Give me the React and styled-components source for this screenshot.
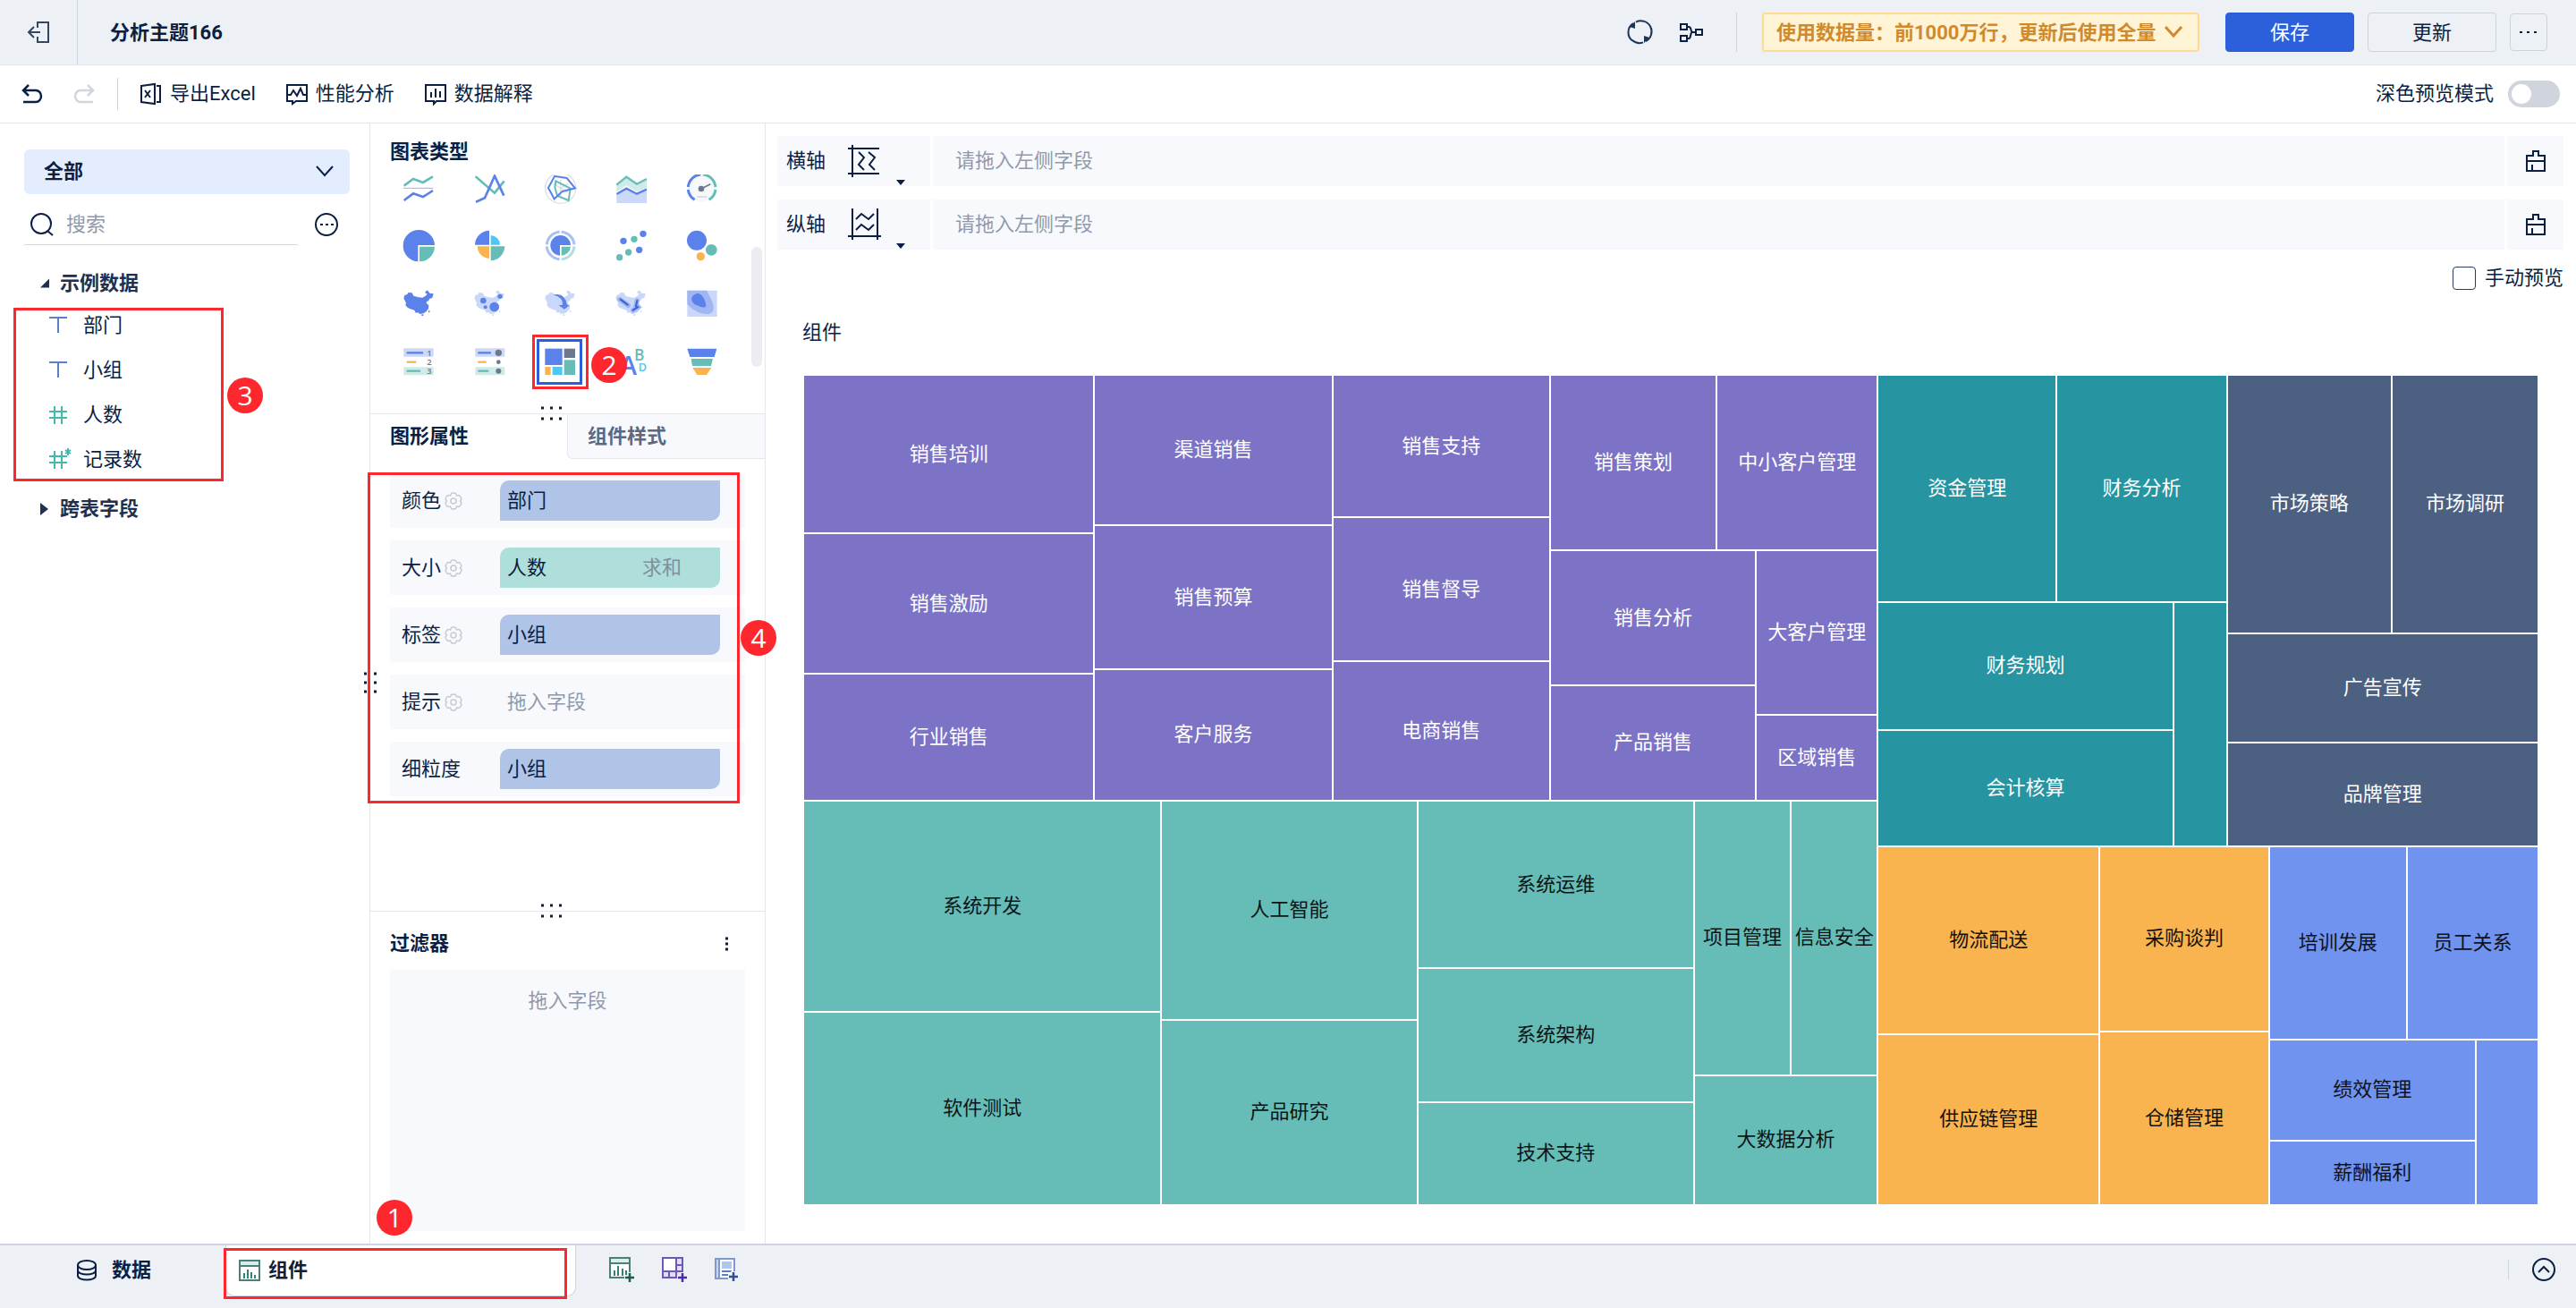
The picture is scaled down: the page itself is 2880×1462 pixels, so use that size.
import React from "react";
import styled, { createGlobalStyle, css } from "styled-components";

const INK = "#0b1f43";
const MUTED = "#8f99ab";
const BLUE = "#5a82ea";
const TEAL = "#66bdb7";
const ORANGE = "#f9b44f";
const CYAN = "#50c6f2";
const GREY = "#6b7890";
const PALE_BLUE = "#c9d7fb";

/* ---------- data ---------- */

const FIELDS = [
  { name: "部门", type: "text" },
  { name: "小组", type: "text" },
  { name: "人数", type: "number" },
  { name: "记录数", type: "count" },
];

const ATTRIBUTES = [
  { label: "颜色", gear: true, field: "部门", color: "#b0c4e8" },
  { label: "大小", gear: true, field: "人数", color: "#aedfda", summary: "求和" },
  { label: "标签", gear: true, field: "小组", color: "#b0c4e8" },
  { label: "提示", gear: true },
  { label: "细粒度", field: "小组", color: "#b0c4e8" },
];

const row = (size, items) => ({ size, dir: "row", items });
const col = (size, items) => ({ size, dir: "column", items });
const leaf = (size, name) => ({ size, name });
const dept = (node, bg, fg) => ({ ...node, bg, fg });

const TREE = row(1, [
  col(1200, [
    dept(row(475, [
      col(325, [leaf(177, "销售培训"), leaf(156, "销售激励"), leaf(142, "行业销售")]),
      col(266, [leaf(168, "渠道销售"), leaf(160, "销售预算"), leaf(147, "客户服务")]),
      col(243, [leaf(159, "销售支持"), leaf(160, "销售督导"), leaf(156, "电商销售")]),
      col(366, [
        row(196, [leaf(186, "销售策划"), leaf(180, "中小客户管理")]),
        row(279, [
          col(230, [leaf(150, "销售分析"), leaf(129, "产品销售")]),
          col(136, [leaf(183, "大客户管理"), leaf(96, "区域销售")]),
        ]),
      ]),
    ]), "#7c73c6", "#ffffff"),
    dept(row(451, [
      col(400, [leaf(235, "系统开发"), leaf(216, "软件测试")]),
      col(286, [leaf(244, "人工智能"), leaf(207, "产品研究")]),
      col(309, [leaf(187, "系统运维"), leaf(149, "系统架构"), leaf(115, "技术支持")]),
      col(205, [
        row(306, [leaf(108, "项目管理"), leaf(97, "信息安全")]),
        leaf(145, "大数据分析"),
      ]),
    ]), "#66bdb7", "#0d1516"),
  ]),
  col(738, [
    row(526, [
      dept(col(390, [
        row(253, [leaf(200, "资金管理"), leaf(190, "财务分析")]),
        row(273, [
          col(330, [leaf(143, "财务规划"), leaf(130, "会计核算")]),
          leaf(60, ""),
        ]),
      ]), "#2694a1", "#ffffff"),
      dept(col(348, [
        row(288, [leaf(184, "市场策略"), leaf(164, "市场调研")]),
        leaf(122, "广告宣传"),
        leaf(116, "品牌管理"),
      ]), "#4c6081", "#ffffff"),
    ]),
    row(400, [
      dept(row(437, [
        col(248, [leaf(209, "物流配送"), leaf(191, "供应链管理")]),
        col(189, [leaf(206, "采购谈判"), leaf(194, "仓储管理")]),
      ]), "#f9b44f", "#14120d"),
      dept(col(301, [
        row(215, [leaf(154, "培训发展"), leaf(147, "员工关系")]),
        row(185, [
          col(231, [leaf(113, "绩效管理"), leaf(72, "薪酬福利")]),
          leaf(70, ""),
        ]),
      ]), "#6f93ee", "#0d1220"),
    ]),
  ]),
]);

/* ---------- icons ---------- */

const Line = ({ w, h, box, color = INK, width = 2, children, ...rest }) => (
  <svg width={w} height={h} viewBox={box || `0 0 ${w} ${h}`} fill="none" stroke={color} strokeWidth={width} aria-hidden="true" {...rest}>
    {children}
  </svg>
);

const ExitIcon = () => (
  <Line w={24} h={24} color="#33475f">
    <path d="M11 7V1h12v22H11v-6M1 12h13M7 6l-6 6 6 6" />
  </Line>
);

const RefreshIcon = () => (
  <Line w={28} h={28} color="#1d3557">
    <path d="M6 23.500A12 12 0 0 1 7 4M10 2.600A12 12 0 0 1 21 24M18 25.400A12 12 0 0 1 6 23" />
    <path d="M9 2v8l-6-2zM19 26v-8l6 2z" fill="#1d3557" stroke="none" />
  </Line>
);

const FlowIcon = () => (
  <Line w={28} h={24}>
    <path d="M2 3h7v6H2zM2 16h7v6H2zM19 9h7v6h-7zM9 6h2q2 0 2.500 3l1 3q-1 1-1.500 4-.5 3-2 3H9M14 12h5" />
  </Line>
);

const Chevron = ({ color = INK, width = 2, size = 20 }) => (
  <Line w={size} h={12} box="0 0 20 12" color={color} width={width}>
    <path d="M1 1l9 10 9-10" />
  </Line>
);

const UndoIcon = ({ color = INK, flip }) => (
  <Line w={24} h={22} color={color} width={2.5} transform={flip ? "scale(-1 1)" : undefined}>
    <path d="M8 1L2 7l6 6M2 7h14a6 6.500 0 0 1 0 13H2" />
  </Line>
);

const ExcelIcon = () => (
  <Line w={24} h={24}>
    <path d="M1 3l15-2v22L1 21zM18 3h4v18h-4M5 8l6 8M11 8l-6 8" />
  </Line>
);

const PerformanceIcon = () => (
  <Line w={24} h={24}>
    <path d="M1 2h22v18H11l-4 3v-3H1zM1 13h4l3-5 4 6 4-8 3 7h4" />
  </Line>
);

const ExplainIcon = () => (
  <Line w={24} h={24}>
    <path d="M1 2h22v18H13l-3 3v-3H1zM7 10v6M12 6v10M17 9v7" />
  </Line>
);

const SearchIcon = () => (
  <Line w={26} h={26} width={2}>
    <circle cx="12" cy="12" r="11" />
    <path d="M19 20l6 5" />
  </Line>
);

const MoreCircleIcon = () => (
  <Line w={26} h={26} width={2}>
    <circle cx="13" cy="13" r="12" />
    <path d="M6 13h3M12 13h3M18 13h3" />
  </Line>
);

const FieldIcon = ({ type }) => {
  if (type === "text") {
    return (
      <Line w={26} h={22} color="#5b80cb" width={2}>
        <path d="M0 2h20M10 2v17" />
      </Line>
    );
  }
  return (
    <Line w={26} h={22} color="#42b9aa" width={2}>
      <path d="M0 7h20M0 14h20M6 1v20M14 1v20" />
      {type === "count" && <path d="M21-2v8M18 0l6 4M24 0l-6 4" />}
    </Line>
  );
};

const GearIcon = () => (
  <Line w={20} h={20} color="#c5cad4" width={1.5}>
    <path d="M7.500 1.500q2.500-1 5 0l1 2.500 3-.5q2 1.500 2.500 4.500l-1.500 2 1.500 2q-.5 3-2.500 4.500l-3-.5-1 2.500q-2.500 1-5 0l-1-2.500-3 .5q-2-1.500-2.500-4.500l1.500-2-1.500-2q.5-3 2.500-4.500l3 .5z" />
    <circle cx="10" cy="10" r="3" />
  </Line>
);

const HorizontalAxisIcon = () => (
  <Line w={38} h={38}>
    <path d="M6 1v36M1 5h35M1 33h35M13 9l6 6-6 8 6 6M24 9l7 6-6 8 6 6" />
  </Line>
);

const VerticalAxisIcon = () => (
  <Line w={38} h={38}>
    <path d="M6 1v35M34 1v35M1 32h37M10 13l6-6 8 6 6-6M10 25l6-6 8 6 6-6" />
  </Line>
);

const BrushIcon = () => (
  <Line w={24} h={24}>
    <path d="M9 6V1h6v5h7v6H2V6zM2 12v11h20V12M8 16v7" />
  </Line>
);

const DatabaseIcon = () => (
  <Line w={22} h={24}>
    <ellipse cx="11" cy="6" rx="10" ry="5" />
    <path d="M1 6v12c0 6 20 6 20 0V6M1 12c0 6 20 6 20 0" />
  </Line>
);

const ComponentIcon = () => (
  <Line w={24} h={24} color="#4c7f7a">
    <path d="M1 1h22v6H1z" fill="#d8eeeb" />
    <path d="M1 7h22v16H1z" fill="#fff" />
    <path d="M6 15v6M10 11v10M14 14v7M18 17v4" stroke="#2f8276" />
  </Line>
);

const AddComponentIcon = () => (
  <Line w={28} h={28} color="#4c7f7a">
    <path d="M1 1h22v6H1z" fill="#d8eeeb" />
    <path d="M1 7h22v16H1z" fill="#fff" />
    <path d="M6 15v6M10 10v11M15 13v8M19 15v5" stroke="#2f8276" />
    <path d="M23 17v12M17 23h12" stroke="#edf1f6" strokeWidth="6" />
    <path d="M23 18v10M18 23h10" stroke="#22594f" strokeWidth="2.500" />
  </Line>
);

const AddDashboardIcon = () => (
  <Line w={28} h={28} color="#6d58b8">
    <path d="M1 1h22v22H1z" fill="#e1dcf8" />
    <path d="M1 1h15v15H1z" fill="#fff" />
    <path d="M16 9h7M8 16v7M16 16v7M16 16h7" />
    <path d="M23 17v12M17 23h12" stroke="#edf1f6" strokeWidth="6" />
    <path d="M23 18v10M18 23h10" stroke="#4a2fa0" strokeWidth="2.500" />
  </Line>
);

const AddReportIcon = () => (
  <Line w={28} h={28} color="#8299c8">
    <path d="M1 2h21v22H1z" fill="#fff" />
    <path d="M1 2h4v22H1z" fill="#c5d5f2" />
    <path d="M8 5h11v8H8z" fill="#b0c6ec" stroke="none" />
    <path d="M8 16h11M8 20h7" stroke="#4f7fd0" />
    <path d="M21 16v12M15 22h12" stroke="#edf1f6" strokeWidth="6" />
    <path d="M21 17v10M16 22h10" stroke="#2f4f90" strokeWidth="2.500" />
  </Line>
);

const CollapseIcon = () => (
  <Line w={26} h={26} width={2}>
    <circle cx="13" cy="13" r="12" />
    <path d="M7 16l6-6 6 6" />
  </Line>
);

const CHINA =
  "M4 34l3-10 9-3 3-6 13 1 5 10 16 5 14 1 9-5 7-7-7-4 2-6 7-2 6 9 13 2-4 14-10 3-2 7-6 1-2 6 8 8-1 11-9 11-8 5-12 2-6-5-8 1-4-9-14-4-8-4-8-8 2-8zM64 88h6v5h-6zM88 74h3v8h-4z";

const CHART_ICONS = [
  {
    name: "多系列折线图",
    art: (
      <g fill="none" strokeWidth="8">
        <path d="M5 47l31-23 33 12 33-20" stroke={TEAL} />
        <path d="M3 55h100" stroke="#a8afbd" strokeWidth="3" />
        <path d="M5 96l31-23 33 11 33-21" stroke={BLUE} />
      </g>
    ),
  },
  {
    name: "对比折线图",
    art: (
      <g fill="none" strokeWidth="8">
        <path d="M8 16l64 55 32-40" stroke={TEAL} />
        <path d="M9 101l30-13 33-74 31 66" stroke={BLUE} />
      </g>
    ),
  },
  {
    name: "雷达图",
    art: (
      <g fill="none" strokeWidth="6">
        <circle cx="56" cy="55" r="51" stroke="#dcdfe7" strokeWidth="4" />
        <path d="M56 55V28M56 55l26-16M56 55l-22-14M56 55v26M56 55l24 14" stroke="#dcdfe7" strokeWidth="4" />
        <path d="M40 31l49 25-6 40-38-16-8-28z" stroke={TEAL} />
        <path d="M36 15l41 6 28 34-43 11-27 25-20-37z" stroke={BLUE} />
      </g>
    ),
  },
  {
    name: "面积图",
    art: (
      <g fill="none">
        <path d="M7 44l33-27 35 24 33-17v30l-33 12-35-20-33 22z" fill="#cfebe7" />
        <path d="M7 78l33-22 35 18 33-14v45H7z" fill="#ccd8f8" />
        <path d="M7 44l33-27 35 24 33-17" stroke={TEAL} strokeWidth="7" />
        <path d="M7 75l33-19 35 18 33-15" stroke={BLUE} strokeWidth="7" />
      </g>
    ),
  },
  {
    name: "仪表盘",
    art: (
      <g fill="none" strokeWidth="9">
        <circle cx="56" cy="55" r="46" fill="#f7f8fa" />
        <path d="M32 94A46 46 0 0 1 10 60M10 51A46 46 0 0 1 52 9" stroke={BLUE} />
        <path d="M60 9a46 46 0 0 1 42 42M102 60a46 46 0 0 1-22 34" stroke={TEAL} />
        <path d="M40 84h34" stroke="#dcdfe7" strokeWidth="6" />
        <circle cx="54" cy="57" r="10" fill={GREY} />
        <path d="M54 57l31-16" stroke={GREY} strokeWidth="5" />
      </g>
    ),
  },
  {
    name: "饼图",
    art: (
      <g>
        <path d="M52 106A53 53 0 1 1 108 51H52z" fill={BLUE} />
        <path d="M57 56h51a52 52 0 0 1-51 50z" fill={TEAL} />
      </g>
    ),
  },
  {
    name: "玫瑰图",
    art: (
      <g>
        <path d="M54 50V2A49 49 0 0 0 6 50z" fill={BLUE} />
        <path d="M59 50V18a32 32 0 0 1 31 32z" fill={CYAN} />
        <path d="M54 55v41a42 42 0 0 1-40-41z" fill={ORANGE} />
        <path d="M59 55v48a49 49 0 0 0 47-48z" fill={TEAL} />
      </g>
    ),
  },
  {
    name: "多层饼图",
    art: (
      <g fill="none" strokeWidth="9">
        <path d="M53 98A46 46 0 0 1 10 55M10 49A46 46 0 0 1 53 7M59 7a46 46 0 0 1 43 42" stroke="#a9bff5" />
        <path d="M102 55a46 46 0 0 1-43 43" stroke="#b3dfda" />
        <path d="M54 86A34 34 0 1 1 90 51H54z" fill={BLUE} />
        <path d="M59 56h31a33 33 0 0 1-31 30z" fill={TEAL} />
      </g>
    ),
  },
  {
    name: "散点图",
    art: (
      <g>
        <g fill={BLUE}>
          <circle cx="30" cy="37" r="11" />
          <circle cx="96" cy="13" r="11" />
          <circle cx="83" cy="67" r="11" />
        </g>
        <g fill={TEAL}>
          <circle cx="66" cy="31" r="11" />
          <circle cx="47" cy="75" r="11" />
          <circle cx="17" cy="92" r="11" />
        </g>
      </g>
    ),
  },
  {
    name: "聚合气泡图",
    art: (
      <g>
        <circle cx="39" cy="35" r="33" fill={BLUE} />
        <circle cx="88" cy="67" r="19" fill={TEAL} />
        <circle cx="52" cy="89" r="14" fill={ORANGE} />
      </g>
    ),
  },
  { name: "区域地图", art: <path d={CHINA} fill={BLUE} /> },
  {
    name: "点地图",
    art: (
      <g fill={BLUE}>
        <path d={CHINA} fill={PALE_BLUE} />
        <circle cx="34" cy="42" r="10" />
        <circle cx="90" cy="28" r="8" />
        <circle cx="71" cy="63" r="16" />
        <circle cx="41" cy="64" r="6" />
      </g>
    ),
  },
  {
    name: "流向地图",
    art: (
      <g>
        <path d={CHINA} fill={PALE_BLUE} />
        <path d="M34 22Q70 14 78 56l8 2-17 13-19-13 13-2Q64 30 34 24z" fill={BLUE} />
      </g>
    ),
  },
  {
    name: "热力地图",
    art: (
      <g fill="none" strokeLinecap="round">
        <path d={CHINA} fill={PALE_BLUE} />
        <path d="M18 38l28 20M76 42l-4 18 6 4-16 10" stroke="#9ab4f3" strokeWidth="16" />
        <path d="M20 38l24 18M76 42l-4 18 6 4-16 10" stroke="#3a63cf" strokeWidth="6" />
      </g>
    ),
  },
  {
    name: "密度图",
    art: (
      <g>
        <path d="M7 8h100v88H7z" fill={PALE_BLUE} />
        <path d="M7 8h66c8 20 24 40 22 62-2 14-12 20-30 16C44 84 20 70 7 54z" fill="#9fb6f2" />
        <path d="M22 34c2-10 18-20 28-14 12 8 20 24 20 40-8 12-22-2-36-4-8-6-14-14-12-22z" fill={BLUE} />
      </g>
    ),
  },
  {
    name: "分组表",
    art: (
      <g fill="none" strokeWidth="7">
        <path d="M4 7h100v28H4z" fill="#ccd8f8" />
        <path d="M4 70h100v27H4z" fill="#cfebe7" />
        <path d="M14 22h55" stroke={BLUE} />
        <path d="M14 53h32" stroke={ORANGE} />
        <path d="M14 83h46" stroke={TEAL} />
        <g fill={GREY} fontSize="28" fontWeight="600" textAnchor="middle" fontFamily="Open Sans">
          <text x="90" y="32">1</text>
          <text x="90" y="63">2</text>
          <text x="90" y="94">3</text>
        </g>
      </g>
    ),
  },
  {
    name: "交叉表",
    art: (
      <g fill="none" strokeWidth="7">
        <path d="M7 7h99v28H7z" fill="#ccd8f8" />
        <path d="M7 70h99v27H7z" fill="#cfebe7" />
        <path d="M16 22h44" stroke={BLUE} />
        <path d="M16 53h28" stroke={ORANGE} />
        <path d="M16 83h36" stroke={TEAL} />
        <circle cx="85" cy="22" r="11" fill={GREY} />
        <circle cx="85" cy="53" r="7" fill={GREY} />
        <circle cx="85" cy="83" r="9" fill={GREY} />
      </g>
    ),
  },
  {
    name: "矩形树图",
    selected: true,
    art: (
      <g>
        <path d="M4 8h58v55H4z" fill={BLUE} />
        <path d="M68 8h37v31H68z" fill={GREY} />
        <path d="M68 46h37v50H68z" fill={TEAL} />
        <path d="M4 69h19v27H4z" fill={ORANGE} />
        <path d="M29 69h33v27H29z" fill={CYAN} />
      </g>
    ),
  },
  {
    name: "词云",
    art: (
      <g fontFamily="Open Sans" fontWeight="600">
        <text x="18" y="96" fontSize="86" fill={BLUE}>A</text>
        <text x="66" y="47" fontSize="52" fill={TEAL}>B</text>
        <text x="80" y="85" fontSize="38" fill={CYAN}>D</text>
      </g>
    ),
  },
  {
    name: "漏斗图",
    art: (
      <g>
        <path d="M7 8h99l-8 28H16z" fill={BLUE} />
        <path d="M20 42h73l-6 24H24z" fill={TEAL} />
        <path d="M25 72h63L72 96H40z" fill={ORANGE} />
      </g>
    ),
  },
];

const DotsIcon = ({ vertical }) =>
  vertical ? (
    <Line w={16} h={24} width={3}>
      <path d="M1 2h3M1 12h3M1 22h3M12 2h3M12 12h3M12 22h3" />
    </Line>
  ) : (
    <Line w={24} h={16} width={3}>
      <path d="M1 2h3M11 2h3M21 2h3M1 14h3M11 14h3M21 14h3" />
    </Line>
  );

/* ---------- treemap ---------- */

const TreeNode = ({ node }) => {
  if (!node.items) {
    return <TreeCell $size={node.size}>{node.name}</TreeCell>;
  }
  return (
    <TreeGroup $size={node.size} $dir={node.dir} $bg={node.bg} $fg={node.fg}>
      {node.items.map((item, i) => (
        <TreeNode key={i} node={item} />
      ))}
    </TreeGroup>
  );
};

/* ---------- page ---------- */

const TopBar = () => (
  <Header>
    <ExitButton aria-label="退出"><ExitIcon /></ExitButton>
    <Title>分析主题166</Title>
    <HeaderTools>
      <IconButton aria-label="刷新"><RefreshIcon /></IconButton>
      <IconButton aria-label="血缘"><FlowIcon /></IconButton>
    </HeaderTools>
    <Divider $height={44} />
    <DataVolume>
      <VolumeSelect aria-label="数据量">
        <option>使用数据量：前1000万行，更新后使用全量</option>
      </VolumeSelect>
      <VolumeArrow><Chevron color="#d08a2c" width={3} size={22} /></VolumeArrow>
    </DataVolume>
    <HeaderActions>
      <ActionButton $primary>保存</ActionButton>
      <ActionButton>更新</ActionButton>
      <MoreButton aria-label="更多">
        <Line w={22} h={4} width={2}><path d="M1 2h3M9 2h3M17 2h3" /></Line>
      </MoreButton>
    </HeaderActions>
  </Header>
);

const ToolBar = () => (
  <Tools>
    <IconButton aria-label="撤销"><UndoIcon /></IconButton>
    <RedoButton aria-label="重做" disabled><UndoIcon color="#d0d5de" flip /></RedoButton>
    <Divider $height={36} />
    <ToolButton><ExcelIcon />导出Excel</ToolButton>
    <ToolButton><PerformanceIcon />性能分析</ToolButton>
    <ToolButton><ExplainIcon />数据解释</ToolButton>
    <SwitchLabel>
      深色预览模式
      <Switch type="checkbox" role="switch" />
    </SwitchLabel>
  </Tools>
);

const FieldPanel = () => (
  <Fields>
    <TableSelectWrap>
      <TableSelect aria-label="数据表"><option>全部</option></TableSelect>
      <TableArrow><Chevron /></TableArrow>
    </TableSelectWrap>
    <SearchRow>
      <SearchBox>
        <SearchIcon />
        <SearchInput type="text" placeholder="搜索" aria-label="搜索" />
      </SearchBox>
      <IconButton aria-label="更多选项"><MoreCircleIcon /></IconButton>
    </SearchRow>
    <GroupTitle><Triangle $open />示例数据</GroupTitle>
    <FieldList>
      {FIELDS.map((field) => (
        <FieldItem key={field.name}>
          <FieldIcon type={field.type} />
          {field.name}
        </FieldItem>
      ))}
      <FieldMark />
      <FieldBadge>3</FieldBadge>
    </FieldList>
    <GroupTitle><Triangle />跨表字段</GroupTitle>
  </Fields>
);

const ConfigPanel = () => (
  <Config>
    <SideHandle><DotsIcon vertical /></SideHandle>
    <ChartTypes>
      <PanelTitle>图表类型</PanelTitle>
      <ChartScroll>
        <ChartGrid>
          {CHART_ICONS.map((chart) => (
            <ChartCell key={chart.name}>
              <ChartButton aria-label={chart.name} $selected={chart.selected}>
                <svg width="36" height="36" viewBox="0 0 108 108" aria-hidden="true">{chart.art}</svg>
              </ChartButton>
              {chart.selected && <ChartMark />}
              {chart.selected && <ChartBadge>2</ChartBadge>}
            </ChartCell>
          ))}
        </ChartGrid>
      </ChartScroll>
      <ScrollThumb />
    </ChartTypes>

    <Attributes>
      <TopHandle><DotsIcon /></TopHandle>
      <Tabs>
        <Tab $active>图形属性</Tab>
        <Tab>组件样式</Tab>
      </Tabs>
      <AttributeList>
        {ATTRIBUTES.map((attr) => (
          <AttributeRow key={attr.label}>
            <AttributeLabel>
              {attr.label}
              {attr.gear && <GearIcon />}
            </AttributeLabel>
            {attr.field ? (
              <FieldTag $bg={attr.color}>
                {attr.field}
                {attr.summary && <Summary>{attr.summary}</Summary>}
              </FieldTag>
            ) : (
              <EmptyTag>拖入字段</EmptyTag>
            )}
          </AttributeRow>
        ))}
        <AttributeMark />
        <AttributeBadge>4</AttributeBadge>
      </AttributeList>
    </Attributes>

    <Filters>
      <TopHandle><DotsIcon /></TopHandle>
      <FilterHead>
        过滤器
        <IconButton aria-label="过滤器选项">
          <Line w={4} h={16} width={3}><path d="M1 2h3M1 8h3M1 14h3" /></Line>
        </IconButton>
      </FilterHead>
      <DropArea>拖入字段</DropArea>
    </Filters>
  </Config>
);

const AxisRow = ({ label, icon }) => (
  <Axis>
    <AxisHead>
      {label}
      <AxisButton aria-label={`${label}类型`}>
        {icon}
        <Caret />
      </AxisButton>
    </AxisHead>
    <AxisDrop>请拖入左侧字段</AxisDrop>
    <AxisClear aria-label={`清空${label}`}><BrushIcon /></AxisClear>
  </Axis>
);

const Canvas = () => (
  <Main>
    <AxisRow label="横轴" icon={<HorizontalAxisIcon />} />
    <AxisRow label="纵轴" icon={<VerticalAxisIcon />} />
    <PreviewLabel>
      <CheckBox type="checkbox" />
      手动预览
    </PreviewLabel>
    <ChartTitle>组件</ChartTitle>
    <TreeMap>
      <TreeNode node={TREE} />
    </TreeMap>
  </Main>
);

const BottomBar = () => (
  <Footer>
    <DataTab><DatabaseIcon />数据</DataTab>
    <ComponentTab>
      <ComponentIcon />组件
      <TabMark />
      <TabBadge>1</TabBadge>
    </ComponentTab>
    <AddTools>
      <IconButton aria-label="添加组件"><AddComponentIcon /></IconButton>
      <IconButton aria-label="添加仪表板"><AddDashboardIcon /></IconButton>
      <IconButton aria-label="添加分析文档"><AddReportIcon /></IconButton>
    </AddTools>
    <FooterEnd>
      <Divider $height={22} />
      <IconButton aria-label="展开"><CollapseIcon /></IconButton>
    </FooterEnd>
  </Footer>
);

const App = () => (
  <>
    <GlobalStyle />
    <Page>
      <TopBar />
      <ToolBar />
      <Workspace>
        <FieldPanel />
        <ConfigPanel />
        <Canvas />
      </Workspace>
      <BottomBar />
    </Page>
  </>
);

const GlobalStyle = createGlobalStyle`
  * {
    box-sizing: border-box;
  }
  body {
    margin: 0;
    background: #fff;
  }
  body, button, input, select {
    font-family: Roboto, "Noto Sans CJK SC", sans-serif;
    font-size: 22px;
    line-height: 30px;
    color: ${INK};
  }
  button {
    padding: 0;
    border: none;
    background: none;
  }
  svg {
    display: block;
    flex: none;
    overflow: visible;
  }
  ul {
    margin: 0;
    padding: 0;
    list-style: none;
  }
`;

const Page = styled.div`
  display: flex;
  flex-direction: column;
  min-height: 100vh;
`;

const IconButton = styled.button`
  display: flex;
  align-items: center;
  justify-content: center;
`;

const Divider = styled.span`
  width: 1px;
  height: ${({ $height }) => $height}px;
  background: #cfd4dd;
`;

const Mark = styled.span`
  position: absolute;
  border: 3px solid #fe272e;
  pointer-events: none;
`;

const Badge = styled.span`
  position: absolute;
  z-index: 2;
  width: 40px;
  height: 40px;
  border-radius: 50%;
  background: #fe272e;
  color: #fff;
  font-family: "Open Sans", sans-serif;
  font-size: 30px;
  line-height: 40px;
  font-weight: 400;
  text-align: center;
`;

/* header */

const Header = styled.header`
  display: flex;
  align-items: center;
  height: 73px;
  padding-right: 32px;
  background: #edf1f6;
  border-bottom: 1px solid #e2e5ec;
`;

const ExitButton = styled(IconButton)`
  align-self: stretch;
  width: 87px;
  border-right: 1px solid #cfd4dd;
`;

const Title = styled.h1`
  flex: 1;
  margin: 0;
  padding: 2px 0 0 36px;
  font-size: 22px;
  font-weight: 700;
`;

const HeaderTools = styled.div`
  display: flex;
  gap: 30px;
  margin-right: 36px;
`;

const DataVolume = styled.div`
  position: relative;
  margin-left: 28px;
`;

const VolumeSelect = styled.select`
  width: 489px;
  height: 44px;
  padding: 2px 46px 0 14px;
  appearance: none;
  border: 2px solid #ffdb8f;
  border-radius: 4px;
  background: #fff4d6;
  color: #d08a2c;
  font-weight: 700;
`;

const VolumeArrow = styled.span`
  position: absolute;
  right: 18px;
  top: 15px;
  pointer-events: none;
`;

const HeaderActions = styled.div`
  display: flex;
  align-items: center;
  gap: 15px;
  margin-left: 29px;
`;

const ActionButton = styled.button`
  width: 144px;
  height: 44px;
  padding-top: 1px;
  border: 1px solid #cdd2dc;
  border-radius: 4px;
  ${({ $primary }) => $primary && css`
    border-color: #2c60db;
    background: #2c60db;
    color: #fff;
  `}
`;

const MoreButton = styled(IconButton)`
  width: 42px;
  height: 42px;
  border: 1px solid #cdd2dc;
  border-radius: 4px;
`;

/* toolbar */

const Tools = styled.div`
  display: flex;
  align-items: center;
  height: 65px;
  padding: 0 18px 0 24px;
  border-bottom: 1px solid #e2e5ec;
`;

const RedoButton = styled(IconButton)`
  margin: 0 25px 0 34px;
`;

const ToolButton = styled.button`
  display: flex;
  align-items: center;
  gap: 9px;
  margin-left: 25px;
  & + & {
    margin-left: 34px;
  }
`;

const SwitchLabel = styled.label`
  display: flex;
  align-items: center;
  gap: 16px;
  margin-left: auto;
`;

const Switch = styled.input`
  width: 58px;
  height: 30px;
  margin: 0;
  padding: 4px;
  appearance: none;
  border-radius: 15px;
  background: #d0d4dc;
  &::before {
    content: "";
    display: block;
    width: 22px;
    height: 22px;
    border-radius: 50%;
    background: #fff;
  }
  &:checked {
    padding-left: 32px;
    background: #2c60db;
  }
`;

const Workspace = styled.div`
  display: flex;
  flex: 1;
`;

/* fields */

const Fields = styled.aside`
  flex: none;
  width: 413px;
  padding: 29px 22px 0 27px;
`;

const TableSelectWrap = styled.div`
  position: relative;
`;

const TableSelect = styled.select`
  display: block;
  width: 100%;
  height: 50px;
  padding: 0 22px;
  appearance: none;
  border: none;
  border-radius: 6px;
  background: #e4edfe;
  font-weight: 700;
`;

const TableArrow = styled.span`
  position: absolute;
  right: 18px;
  top: 18px;
  pointer-events: none;
`;

const SearchRow = styled.div`
  display: flex;
  justify-content: space-between;
  align-items: center;
  padding-right: 13px;
  margin-top: 11px;
`;

const SearchBox = styled.div`
  display: flex;
  align-items: center;
  gap: 14px;
  width: 306px;
  height: 46px;
  padding-left: 7px;
  border-bottom: 1px solid #d5d8df;
`;

const SearchInput = styled.input`
  flex: 1;
  min-width: 0;
  padding: 0;
  border: none;
  outline: none;
  &::placeholder {
    color: ${MUTED};
    opacity: 1;
  }
`;

const GroupTitle = styled.div`
  display: flex;
  align-items: center;
  gap: 12px;
  height: 50px;
  padding-left: 18px;
  font-weight: 700;
  color: #20314f;
  ${SearchRow} + & {
    margin-top: 20px;
    height: 45px;
  }
`;

const Triangle = styled.span`
  width: 10px;
  height: 14px;
  background: #20314f;
  clip-path: ${({ $open }) => ($open ? "polygon(100% 14%, 100% 86%, 0 86%)" : "polygon(0 0, 90% 50%, 0 100%)")};
`;

const FieldList = styled.ul`
  position: relative;
  padding-bottom: 5px;
`;

const FieldItem = styled.li`
  display: flex;
  align-items: center;
  gap: 12px;
  height: 50px;
  padding-left: 28px;
`;

const FieldMark = styled(Mark)`
  left: -12px;
  top: 5px;
  width: 235px;
  height: 194px;
`;

const FieldBadge = styled(Badge)`
  left: 227px;
  top: 83px;
`;

/* config */

const Config = styled.section`
  position: relative;
  display: flex;
  flex-direction: column;
  flex: none;
  width: 443px;
  border: solid #e5e7ee;
  border-width: 0 1px;
`;

const SideHandle = styled.span`
  position: absolute;
  left: -8px;
  top: 613px;
`;

const PanelTitle = styled.h2`
  margin: 0;
  padding: 17px 22px 0;
  font-size: 22px;
  line-height: 30px;
  font-weight: 700;
`;

const ChartTypes = styled.div`
  position: relative;
  display: flex;
  flex-direction: column;
  height: 324px;
`;

const ChartScroll = styled.div`
  display: flex;
  flex-direction: column;
  justify-content: flex-end;
  flex: 1;
  min-height: 0;
  margin-top: 10px;
  padding: 0 0 25px 14px;
  overflow: hidden;
`;

const ChartGrid = styled.div`
  display: grid;
  flex: none;
  grid-template-columns: repeat(5, 79px);
  grid-auto-rows: 65px;
`;

const ChartCell = styled.div`
  position: relative;
  display: flex;
  align-items: center;
  justify-content: center;
`;

const ChartButton = styled(IconButton)`
  width: 51px;
  height: 51px;
  border: 3px solid ${({ $selected }) => ($selected ? "#2c60db" : "transparent")};
`;

const ChartMark = styled(Mark)`
  left: 9px;
  top: 2px;
  width: 63px;
  height: 61px;
`;

const ChartBadge = styled(Badge)`
  left: 75px;
  top: 16px;
`;

const ScrollThumb = styled.span`
  position: absolute;
  right: 3px;
  top: 138px;
  width: 12px;
  height: 134px;
  border-radius: 6px;
  background: #ecedf2;
`;

const TopHandle = styled.span`
  position: absolute;
  left: 190px;
  top: -9px;
`;

const Attributes = styled.div`
  position: relative;
  flex: 1;
  border-top: 1px solid #e5e7ee;
`;

const Tabs = styled.div`
  display: flex;
`;

const Tab = styled.button`
  flex: 1;
  height: 50px;
  padding-left: 22px;
  text-align: left;
  font-weight: 700;
  ${({ $active }) => !$active && css`
    border: solid #e5e7ee;
    border-width: 0 0 1px 1px;
    border-radius: 0 0 0 6px;
    background: #f8f9fd;
    color: #5c6980;
  `}
`;

const AttributeList = styled.div`
  position: relative;
  display: flex;
  flex-direction: column;
  gap: 14px;
  padding: 16px 22px 0;
`;

const AttributeRow = styled.div`
  display: flex;
  align-items: center;
  height: 61px;
  padding: 0 28px 0 13px;
  background: #f8f9fd;
`;

const AttributeLabel = styled.span`
  display: flex;
  align-items: center;
  gap: 4px;
  width: 110px;
`;

const FieldTag = styled.span`
  display: flex;
  align-items: center;
  justify-content: space-between;
  flex: 1;
  height: 45px;
  padding: 0 43px 0 8px;
  border-radius: 10px 0;
  background: ${({ $bg }) => $bg};
`;

const Summary = styled.span`
  color: #7f8fa0;
`;

const EmptyTag = styled.span`
  padding-left: 8px;
  color: ${MUTED};
`;

const AttributeMark = styled(Mark)`
  left: -3px;
  top: 15px;
  width: 416px;
  height: 370px;
`;

const AttributeBadge = styled(Badge)`
  left: 414px;
  top: 180px;
`;

const Filters = styled.div`
  position: relative;
  display: flex;
  flex-direction: column;
  height: 372px;
  padding: 21px 22px 14px;
  border-top: 1px solid #e5e7ee;
`;

const FilterHead = styled.div`
  display: flex;
  align-items: center;
  justify-content: space-between;
  padding-right: 19px;
  font-weight: 700;
`;

const DropArea = styled.div`
  flex: 1;
  margin-top: 14px;
  padding-top: 20px;
  background: #f8f9fd;
  color: ${MUTED};
  text-align: center;
`;

/* canvas */

const Main = styled.main`
  display: flex;
  flex-direction: column;
  flex: 1;
  min-width: 0;
  padding: 14px 14px 43px 13px;
`;

const Axis = styled.div`
  display: flex;
  gap: 3px;
  height: 56px;
  & + & {
    margin-top: 15px;
  }
  & > * {
    background: #f8f9fd;
  }
`;

const AxisHead = styled.div`
  display: flex;
  align-items: center;
  justify-content: space-between;
  width: 171px;
  padding-left: 10px;
  line-height: 32px;
`;

const AxisButton = styled.button`
  display: flex;
  align-items: center;
  justify-content: space-between;
  width: 65px;
  height: 56px;
  margin-right: 28px;
`;

const Caret = styled.span`
  align-self: flex-end;
  margin-bottom: 1px;
  border: solid transparent;
  border-width: 6px 5px 0;
  border-top-color: ${INK};
`;

const AxisDrop = styled.div`
  flex: 1;
  padding-left: 25px;
  line-height: 56px;
  color: ${MUTED};
`;

const AxisClear = styled(IconButton)`
  width: 63px;
`;

const PreviewLabel = styled.label`
  display: flex;
  align-items: center;
  align-self: flex-end;
  gap: 10px;
  margin-top: 17px;
`;

const CheckBox = styled.input`
  width: 26px;
  height: 26px;
  margin: 0;
  appearance: none;
  border: 1px solid #2b3c5c;
  border-radius: 4px;
  background: #fff;
  &:checked {
    background: #2c60db;
  }
`;

const ChartTitle = styled.div`
  margin: 31px 0 32px 28px;
`;

const TreeMap = styled.div`
  display: flex;
  flex: 1;
  margin: 0 28px 0 29px;
`;

const TreeGroup = styled.div`
  display: flex;
  flex: ${({ $size }) => $size} 1 0;
  flex-direction: ${({ $dir }) => $dir};
  min-width: 0;
  min-height: 0;
  ${({ $fg }) => $fg && css`color: ${$fg};`}
  ${({ $bg }) => $bg && css`--cell: ${$bg};`}
`;

const TreeCell = styled.div`
  display: flex;
  align-items: center;
  justify-content: center;
  flex: ${({ $size }) => $size} 1 0;
  min-width: 0;
  min-height: 0;
  background: var(--cell);
  box-shadow: inset 0 0 0 1px #fff;
  white-space: nowrap;
`;

/* footer */

const Footer = styled.footer`
  display: flex;
  height: 72px;
  border-top: 2px solid #cfd4e0;
  background: #edf1f6;
`;

const DataTab = styled.button`
  display: flex;
  align-items: center;
  gap: 17px;
  width: 252px;
  height: 56px;
  padding-left: 86px;
  font-weight: 700;
`;

const ComponentTab = styled.button`
  position: relative;
  display: flex;
  align-items: center;
  gap: 9px;
  width: 392px;
  height: 57px;
  padding-left: 14px;
  border: solid #cfd4e0;
  border-width: 0 1px 1px;
  border-radius: 0 0 10px 10px;
  background: #fff;
  font-weight: 700;
`;

const TabMark = styled(Mark)`
  left: -3px;
  top: 3px;
  width: 384px;
  height: 57px;
`;

const TabBadge = styled(Badge)`
  left: 168px;
  top: -51px;
`;

const AddTools = styled.div`
  display: flex;
  align-items: center;
  gap: 31px;
  height: 54px;
  margin-left: 37px;
`;

const FooterEnd = styled.div`
  display: flex;
  align-items: center;
  gap: 26px;
  height: 54px;
  margin-left: auto;
  padding-right: 23px;
`;

export default App;
